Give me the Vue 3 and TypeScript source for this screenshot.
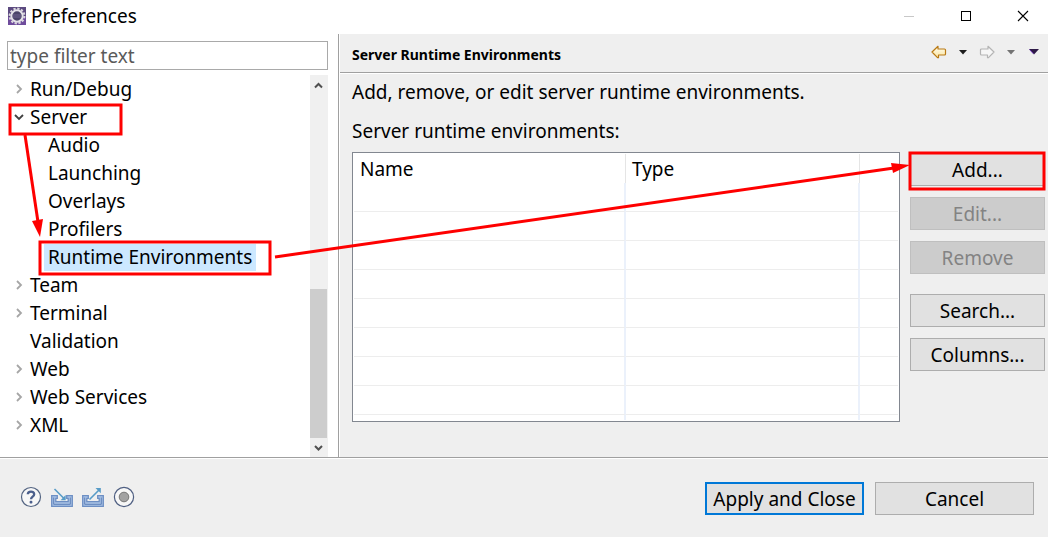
<script setup lang="ts">
import { computed, onBeforeUnmount, onMounted, ref } from 'vue'

interface TreeNode {
  label: string
  level: 1 | 2
  state?: 'open' | 'closed'
}

const nodes: TreeNode[] = [
  { label: 'Run/Debug', level: 1, state: 'closed' },
  { label: 'Server', level: 1, state: 'open' },
  { label: 'Audio', level: 2 },
  { label: 'Launching', level: 2 },
  { label: 'Overlays', level: 2 },
  { label: 'Profilers', level: 2 },
  { label: 'Runtime Environments', level: 2 },
  { label: 'Team', level: 1, state: 'closed' },
  { label: 'Terminal', level: 1, state: 'closed' },
  { label: 'Validation', level: 1 },
  { label: 'Web', level: 1, state: 'closed' },
  { label: 'Web Services', level: 1, state: 'closed' },
  { label: 'XML', level: 1, state: 'closed' },
]

const selected = ref('Runtime Environments')
const filter = ref('')

// The guide arrow ends at the Add button, which follows the right window edge.
const width = ref(window.innerWidth)
const onResize = () => { width.value = window.innerWidth }
onMounted(() => window.addEventListener('resize', onResize))
onBeforeUnmount(() => window.removeEventListener('resize', onResize))

const addX = computed(() => width.value - 138)
</script>

<template>
  <div class="window">
    <header class="titlebar">
      <svg class="app-icon" width="18" height="18" viewBox="0 0 18 18" aria-hidden="true">
        <rect width="18" height="18" fill="#5c4a80" />
        <rect x="0" y="10" width="18" height="8" fill="#6f4c9c" />
        <circle cx="9" cy="9" r="7.4" fill="none" stroke="#d9d7dd" stroke-width="2" stroke-dasharray="2.3 1.575" />
        <circle cx="9" cy="9" r="5.7" fill="#4a4468" stroke="#e4e2e8" stroke-width="2" />
        <path d="M5 8h8M5 10h8" stroke="#6f638f" stroke-width="1" />
      </svg>
      <h1>Preferences</h1>
      <div class="window-controls">
        <button type="button" aria-label="Minimize" disabled>
          <svg width="12" height="12" viewBox="0 0 12 12"><path d="M1 6.5h10" stroke="#c8c8c8" /></svg>
        </button>
        <button type="button" class="maximize" aria-label="Maximize">
          <svg width="12" height="12" viewBox="0 0 12 12"><rect x="1.5" y="1.5" width="9" height="9" fill="none" stroke="#000" /></svg>
        </button>
        <button type="button" aria-label="Close">
          <svg width="12" height="12" viewBox="0 0 12 12"><path d="M1 1l10 10M11 1L1 11" stroke="#000" stroke-width="1.1" /></svg>
        </button>
      </div>
    </header>

    <div class="body">
      <nav class="sidebar" aria-label="Preference pages">
        <input v-model="filter" class="filter" type="text" placeholder="type filter text" aria-label="type filter text">
        <div class="tree-area">
          <ul class="tree" role="tree">
            <li v-for="n in nodes" :key="n.label" role="treeitem" :aria-selected="n.label === selected">
              <button
                type="button"
                class="node"
                :class="{ child: n.level === 2, selected: n.label === selected }"
                @click="selected = n.label"
              >
                <span v-if="n.level === 1" class="twisty">
                  <svg v-if="n.state === 'closed'" width="10" height="10" viewBox="0 0 10 10"><path d="M3 1l4 4-4 4" fill="none" stroke="#a6a6a6" stroke-width="1.8" /></svg>
                  <svg v-else-if="n.state === 'open'" width="10" height="10" viewBox="0 0 10 10"><path d="M1 3l4 4 4-4" fill="none" stroke="#404040" stroke-width="1.8" /></svg>
                </span>
                <span class="node-label">{{ n.label }}</span>
              </button>
            </li>
          </ul>
          <div class="scrollbar" aria-hidden="true">
            <svg width="18" height="20" viewBox="0 0 18 20"><path d="M5 12.5L8.500 9L12 12.500" fill="none" stroke="#505050" stroke-width="2" /></svg>
            <div class="track"><div class="thumb"></div></div>
            <svg width="18" height="19" viewBox="0 0 18 19"><path d="M5 8L8.500 11.500L12 8" fill="none" stroke="#505050" stroke-width="2" /></svg>
          </div>
        </div>
      </nav>

      <main class="page">
        <div class="page-head">
          <h2>Server Runtime Environments</h2>
          <div class="history">
            <button type="button" aria-label="Back">
              <svg width="16" height="14" viewBox="0 0 16 14">
                <defs><linearGradient id="gold" x1="0" y1="0" x2="0" y2="1"><stop offset="0" stop-color="#fffdf0" /><stop offset="1" stop-color="#fbe5a0" /></linearGradient></defs>
                <path d="M1 7L7 1.300V4H13.500Q14.500 4 14.500 5V9Q14.500 10 13.500 10H7.500V12.700H6.500Z" fill="url(#gold)" stroke="#b97a14" stroke-width="1.2" stroke-linejoin="round" />
              </svg>
            </button>
            <button type="button" aria-label="Back history">
              <svg width="8" height="5" viewBox="0 0 8 5"><path d="M0 0H8L4 4.500Z" fill="#1c1c1c" /></svg>
            </button>
            <button type="button" aria-label="Forward" disabled>
              <svg width="16" height="14" viewBox="0 0 16 14">
                <path d="M15 7L9 1.300V4H2.500Q1.500 4 1.500 5V9Q1.500 10 2.500 10H8.500V12.700H9.500Z" fill="#f6f6f6" stroke="#b4b4b4" stroke-width="1.200" stroke-linejoin="round" />
              </svg>
            </button>
            <button type="button" aria-label="Forward history" disabled>
              <svg width="8" height="5" viewBox="0 0 8 5"><path d="M0 0H8L4 4.500Z" fill="#737373" /></svg>
            </button>
            <button type="button" class="view-menu" aria-label="View menu">
              <svg width="10" height="6" viewBox="0 0 10 6"><path d="M0 0H10L5 5.500Z" fill="#2e1a47" /><path d="M0.500 0.500L4.500 4.800" stroke="#6a35b0" /></svg>
            </button>
          </div>
        </div>

        <div class="page-body">
          <p class="description">Add, remove, or edit server runtime environments.</p>
          <p id="list-label" class="list-label">Server runtime environments:</p>
          <div class="columns">
            <div class="grid-box">
              <table aria-labelledby="list-label">
                <colgroup><col class="c-name"><col class="c-type"><col></colgroup>
                <thead>
                  <tr><th scope="col">Name</th><th scope="col">Type</th><td></td></tr>
                </thead>
                <tbody>
                  <tr v-for="r in 8" :key="r"><td></td><td></td><td></td></tr>
                  <tr class="rest"><td></td><td></td><td></td></tr>
                </tbody>
              </table>
            </div>
            <div class="actions">
              <button type="button" class="btn">Add...</button>
              <button type="button" class="btn" disabled>Edit...</button>
              <button type="button" class="btn" disabled>Remove</button>
              <button type="button" class="btn spaced">Search...</button>
              <button type="button" class="btn">Columns...</button>
            </div>
          </div>
        </div>
      </main>
    </div>

    <footer class="footer">
      <div class="tools">
        <button type="button" aria-label="Help">
          <svg width="22" height="22" viewBox="0 0 22 22">
            <circle cx="11" cy="11" r="9.500" fill="#f7f7f7" stroke="#536482" stroke-width="1.200" />
            <path d="M7.800 8.300C7.800 4.700 14.200 4.700 14.200 8.200C14.200 10.600 11 10.600 11 13.200" fill="none" stroke="#4b5f8c" stroke-width="2.300" />
            <rect x="9.600" y="14.800" width="2.800" height="2.600" rx="1" fill="#4b5f8c" />
          </svg>
        </button>
        <button type="button" aria-label="Import">
          <svg width="22" height="22" viewBox="0 0 22 22">
            <path d="M0.700 9.700H6.300V12.300H4.800V15.700H17.200V12.300H15.700V9.700H21.300V20.300H0.700Z" fill="#a9c2e5" stroke="#6d8fc4" stroke-width="1.300" />
            <path d="M2.700 11.500V18.300H19.300V11.500" fill="none" stroke="#6082ba" stroke-width="1" />
            <path d="M3.500 3L13 12.500" fill="none" stroke="#579bc7" stroke-width="1.600" />
            <path d="M14.700 9V14.200H9.500Z" fill="#579bc7" />
          </svg>
        </button>
        <button type="button" aria-label="Export">
          <svg width="22" height="22" viewBox="0 0 22 22">
            <path d="M0.700 9.700H6.300V12.300H4.800V15.700H17.200V12.300H15.700V9.700H21.300V20.300H0.700Z" fill="#a9c2e5" stroke="#6d8fc4" stroke-width="1.300" />
            <path d="M2.700 11.500V18.300H19.300V11.500" fill="none" stroke="#6082ba" stroke-width="1" />
            <path d="M7.500 13.500L17 4" fill="none" stroke="#579bc7" stroke-width="1.600" />
            <path d="M13.500 2H18.800V7.300Z" fill="#579bc7" />
          </svg>
        </button>
        <button type="button" aria-label="Record">
          <svg width="22" height="22" viewBox="0 0 22 22">
            <circle cx="11" cy="11" r="9.600" fill="#f7f7f7" stroke="#4f5f82" stroke-width="1.200" />
            <circle cx="11" cy="11" r="4.800" fill="#a2a2a2" stroke="#777" stroke-width="1" />
          </svg>
        </button>
      </div>
      <div class="confirm">
        <button type="button" class="btn primary">Apply and Close</button>
        <button type="button" class="btn">Cancel</button>
      </div>
    </footer>

    <svg class="guide" aria-hidden="true">
      <g fill="none" stroke="#fe0000" stroke-width="3">
        <rect x="10" y="105" width="111" height="29" />
        <rect x="40" y="242" width="230" height="32" />
        <rect :x="addX" y="153" width="134" height="36" />
        <path d="M25 135L38 222" />
        <path :d="`M275 257L${addX - 16} 168`" />
      </g>
      <path d="M32 221L43 219L40 237Z" fill="#fe0000" />
      <path :d="`M${addX} 165L${addX - 19} 163L${addX - 17} 173Z`" fill="#fe0000" />
    </svg>
  </div>
</template>

<style>
body {
  margin: 0;
}
</style>

<style scoped>
.window {
  position: relative;
  display: flex;
  flex-direction: column;
  min-height: 100vh;
  background: #efefef;
  color: #000;
  font-family: "Noto Sans", "Open Sans", sans-serif;
  font-size: 19px;
  line-height: 28px;
}

h1, h2, p, ul {
  margin: 0;
  padding: 0;
  font-weight: 400;
}

button {
  padding: 0;
  border: 0;
  background: none;
  color: inherit;
  font: inherit;
}

svg {
  display: block;
}

.titlebar {
  display: flex;
  align-items: center;
  box-sizing: border-box;
  height: 34px;
  padding: 0 0 2px 8px;
  background: #fff;
}

h1 {
  flex: 1;
  margin-left: 5px;
  font-size: 19px;
}

.window-controls {
  display: flex;
}

.window-controls button {
  display: flex;
  justify-content: center;
  width: 50px;
}

.window-controls .maximize {
  width: 64px;
}

.body {
  display: flex;
  flex: 1;
  border-bottom: 1px solid #a0a0a0;
  box-shadow: 0 1px #fff;
}

.sidebar {
  display: flex;
  flex-direction: column;
  flex: none;
  box-sizing: border-box;
  width: 339px;
  padding: 7px 10px 0 7px;
  border-right: 1px solid #a0a0a0;
  background: #fff;
}

.filter {
  box-sizing: border-box;
  width: 100%;
  height: 29px;
  padding: 0 2px;
  border: 1px solid #a9a9a9;
  border-radius: 0;
  outline: 0;
  font: inherit;
}

.filter::placeholder {
  color: #5a5a5a;
  opacity: 1;
}

.tree-area {
  display: flex;
  flex: 1;
  margin-top: 5px;
}

.tree {
  flex: 1;
  list-style: none;
}

.node {
  display: flex;
  align-items: center;
  height: 28px;
  white-space: nowrap;
}

.node.child {
  padding-left: 37px;
}

.twisty {
  width: 13px;
  padding-left: 7px;
}

.node-label {
  height: 27px;
  padding: 0 4px;
  line-height: 27px;
}

.node:not(.child) .node-label {
  padding-left: 3px;
}

.selected .node-label {
  background: #cce8ff;
}

.scrollbar {
  display: flex;
  flex-direction: column;
  width: 18px;
  background: #f0f0f0;
}

.track {
  display: flex;
  flex: 1;
  flex-direction: column;
  justify-content: flex-end;
}

.thumb {
  width: 17px;
  height: 43.5%;
  background: #cdcdcd;
}

.page {
  display: flex;
  flex: 1;
  flex-direction: column;
  min-width: 0;
  border-left: 1px solid #fff;
}

.page-head {
  display: flex;
  align-items: center;
  justify-content: space-between;
  height: 38px;
  padding: 0 9px 0 12px;
  border-bottom: 1px solid #a0a0a0;
  box-shadow: 0 1px #fff;
}

h2 {
  padding-top: 3px;
  font-size: 14px;
  font-weight: 700;
}

.history {
  display: flex;
  align-items: center;
  gap: 12px;
  padding-bottom: 2px;
}

.view-menu {
  margin-left: 2px;
}

.page-body {
  padding: 5px 3px 35px 12px;
}

.list-label {
  margin-top: 11px;
}

.columns {
  display: flex;
  gap: 10px;
  margin-top: 7px;
}

.grid-box {
  flex: 1;
  min-width: 0;
  padding: 1px;
  border: 1px solid #828790;
  background: #fff;
}

table {
  width: 100%;
  border-spacing: 0;
  table-layout: fixed;
}

.c-name {
  width: 50%;
}

.c-type {
  width: 43%;
}

th, td {
  box-sizing: border-box;
  height: 29px;
  padding: 0;
}

th {
  padding: 0 6px;
  border-right: 1px solid #e5e5e5;
  font-weight: 400;
  text-align: left;
}

tbody td {
  border-right: 2px solid #ebf1fb;
  border-bottom: 1px solid #ededed;
}

tbody td:last-child {
  border-right: 0;
}

.rest td {
  height: 5px;
  border-bottom: 0;
}

.actions {
  display: flex;
  flex-direction: column;
  gap: 11px;
  width: 135px;
  padding-top: 1px;
}

.btn {
  box-sizing: border-box;
  height: 33px;
  padding-top: 2px;
  border: 1px solid #adadad;
  background: #e1e1e1;
  line-height: 29px;
}

.btn:disabled {
  border-color: #bfbfbf;
  background: #ccc;
  color: #838383;
}

.spaced {
  margin-top: 9px;
}

.footer {
  display: flex;
  align-items: center;
  justify-content: space-between;
  height: 79px;
  padding: 0 14px 0 20px;
}

.tools {
  display: flex;
  gap: 9px;
  padding-bottom: 2px;
}

.confirm {
  display: flex;
  gap: 11px;
  padding-top: 2px;
}

.confirm .btn {
  width: 159px;
}

.primary {
  border: 2px solid #0078d7;
  line-height: 27px;
}

.guide {
  position: absolute;
  top: 0;
  left: 0;
  width: 100%;
  height: 100%;
  pointer-events: none;
}
</style>
